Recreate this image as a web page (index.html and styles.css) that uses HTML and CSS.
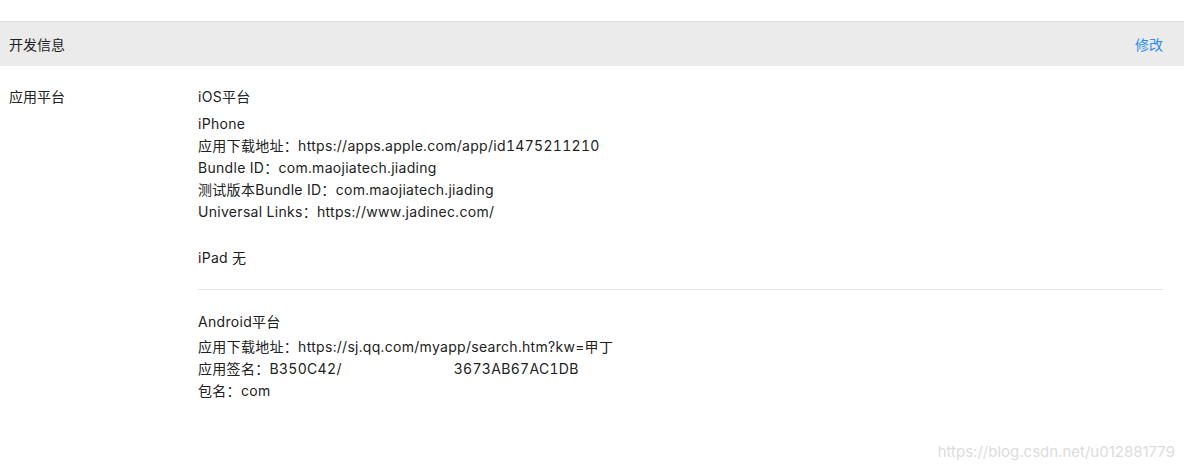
FILE: index.html
```html
<!DOCTYPE html>
<html lang="zh">
<head>
<meta charset="utf-8">
<link rel="stylesheet" href="styles.css">
</head>
<body>
<div class="page">
  <div class="section-head">
    <span class="section-title">开发信息</span>
    <a class="edit">修改</a>
  </div>
  <div class="row">
    <div class="label">应用平台</div>
    <div class="content">
      <div class="platform">
        <div class="platform-title">iOS平台</div>
        <div class="line">iPhone</div>
        <div class="line">应用下载地址：https://apps.apple.com/app/id1475211210</div>
        <div class="line">Bundle ID：com.maojiatech.jiading</div>
        <div class="line">测试版本Bundle ID：com.maojiatech.jiading</div>
        <div class="line">Universal Links：https://www.jadinec.com/</div>
        <div class="line blank"></div>
        <div class="line ipad">iPad 无</div>
      </div>
      <div class="platform android">
        <div class="platform-title">Android平台</div>
        <div class="line">应用下载地址：https://sj.qq.com/myapp/search.htm?kw=甲丁</div>
        <div class="line">应用签名：B350C42/<span class="redact"></span>3673AB67AC1DB</div>
        <div class="line">包名：com</div>
      </div>
    </div>
  </div>
  <div class="watermark">https://blog.csdn.net/u012881779</div>
</div>
</body>
</html>
```
FILE: styles.css
```css
html, body {
  margin: 0;
  padding: 0;
  background: #fff;
}
body {
  font-family: Inter, "Noto Sans CJK SC", sans-serif;
  font-size: 14px;
  color: #222;
}
.page {
  width: 1184px;
  height: 470px;
  position: relative;
  padding-top: 21px;
  box-sizing: border-box;
}
.section-head {
  height: 44px;
  background: #ebebeb;
  border-top: 1px solid #dedede;
  display: flex;
  align-items: center;
  justify-content: space-between;
  padding: 0 21px 0 9px;
}
.section-title {
  font-size: 14px;
  color: #222;
}
.edit {
  color: #2d8cf0;
  font-size: 14px;
  cursor: pointer;
}
.row {
  display: flex;
  padding-top: 20px;
}
.label {
  width: 189px;
  padding-left: 9px;
  line-height: 22px;
  flex: none;
}
.content {
  flex: 1;
  margin-right: 21px;
  letter-spacing: 0.3px;
  font-variant-numeric: tabular-nums;
}
.platform-title {
  line-height: 22px;
  margin-bottom: 5px;
}
.line {
  line-height: 22px;
  white-space: nowrap;
}
.line.blank {
  height: 24px;
}
.platform {
  padding-bottom: 20px;
}
.android {
  border-top: 1px solid #e4e4e4;
  padding-top: 21px;
}
.android .platform-title {
  margin-bottom: 3px;
}
.redact {
  display: inline-block;
  width: 112px;
}
.watermark {
  position: absolute;
  right: 9px;
  bottom: 9px;
  font-size: 15px;
  color: #dcdcdc;
}
```
